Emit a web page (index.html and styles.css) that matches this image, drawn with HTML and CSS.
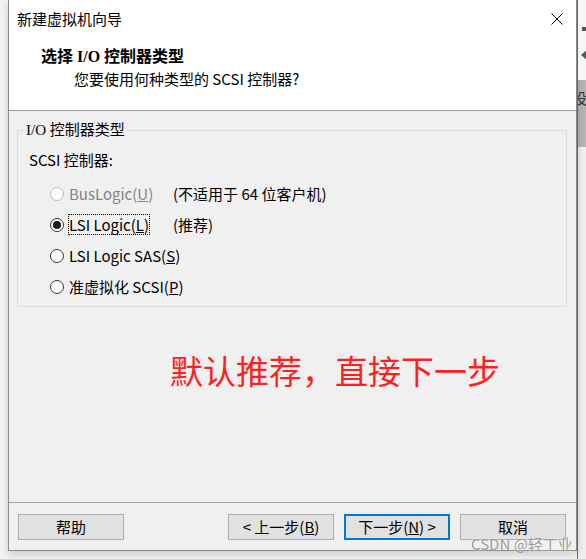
FILE: index.html
```html
<!DOCTYPE html>
<html lang="zh-CN">
<head>
<meta charset="utf-8">
<title>新建虚拟机向导</title>
<link rel="stylesheet" href="styles.css">
</head>
<body>
<div class="screen">
  <div class="dialog">
    <div class="top">
      <div class="titlebar">
        <span class="title">新建虚拟机向导</span>
        <svg class="close" viewBox="0 0 12 12" width="12" height="12"><path d="M0.5 0.5 L11.5 11.5 M11.5 0.5 L0.5 11.5" stroke="#000" stroke-width="1" fill="none"/></svg>
      </div>
      <div class="head-title">选择 I/O 控制器类型</div>
      <div class="head-sub">您要使用何种类型的 SCSI 控制器?</div>
    </div>
    <div class="body">
      <fieldset class="group">
        <legend>I/O 控制器类型</legend>
        <div class="label">SCSI 控制器:</div>
        <div class="options">
          <div class="opt disabled">
            <span class="radio"></span>
            <span class="cell"><span class="txt">BusLogic(<u>U</u>)</span></span>
            <span class="note">(不适用于 64 位客户机)</span>
          </div>
          <div class="opt">
            <span class="radio on"></span>
            <span class="cell"><span class="txt focus">LSI Logic(<u>L</u>)</span></span>
            <span class="note">(推荐)</span>
          </div>
          <div class="opt">
            <span class="radio"></span>
            <span class="cell"><span class="txt">LSI Logic SAS(<u>S</u>)</span></span>
          </div>
          <div class="opt">
            <span class="radio"></span>
            <span class="cell"><span class="txt">准虚拟化 SCSI(<u>P</u>)</span></span>
          </div>
        </div>
      </fieldset>
      <div class="hint">默认推荐，直接下一步</div>
    </div>
    <div class="footer">
      <button class="btn">帮助</button>
      <div class="spacer"></div>
      <button class="btn">&lt; 上一步(<u>B</u>)</button>
      <button class="btn default">下一步(<u>N</u>) &gt;</button>
      <button class="btn">取消</button>
    </div>
    <div class="watermark">CSDN @轻工业</div>
  </div>
  <div class="side">
    <div class="side-top"><span class="dot"></span><span class="arrow"></span></div>
    <div class="side-mid"><span class="clip">设</span></div>
    <div class="side-rest"></div>
  </div>
</div>
</body>
</html>
```

FILE: styles.css
```css
html, body {
  margin: 0;
  padding: 0;
  height: 100%;
}
body {
  background: #f3f3f3;
  font-family: "Noto Sans CJK SC", sans-serif;
  font-size: 15px;
  color: #000;
  overflow: hidden;
}
.screen {
  display: flex;
  height: 559px;
}
.dialog {
  position: relative;
  flex: none;
  margin-left: 8px;
  width: 567px;
  height: 550px;
  border: 1px solid #8a8a8a;
  border-top: none;
  background: #f0f0f0;
  box-shadow: 0 3px 8px rgba(0, 0, 0, 0.18);
  display: flex;
  flex-direction: column;
}
.top {
  flex: none;
  height: 110px;
  background: #fff;
  border-bottom: 1px solid #a0a0a0;
}
.titlebar {
  height: 38px;
  display: flex;
  align-items: center;
  justify-content: space-between;
  padding: 0 13px 0 8px;
}
.title {
  line-height: 20px;
}
.close {
  display: block;
  width: 12px;
  height: 12px;
}
.head-title {
  margin: 9px 0 0 32px;
  font-family: "Liberation Serif", "Noto Sans CJK SC", serif;
  font-weight: bold;
  font-size: 16px;
  line-height: 20px;
}
.head-sub {
  margin: 2px 0 0 65px;
  line-height: 20px;
}
.body {
  flex: none;
  height: 391px;
}
.group {
  margin: 9px 9px 0 8px;
  padding: 10px 0 9px 0;
  border: 1px solid #dcdcdc;
  min-width: 0;
}
.group legend {
  margin-left: 6px;
  padding: 0 2px;
  line-height: 20px;
  font-family: "Liberation Serif", "Noto Sans CJK SC", serif;
  font-size: 15px;
}
.label {
  margin-left: 11px;
  line-height: 20px;
}
.options {
  margin-top: 13px;
  display: flex;
  flex-direction: column;
  gap: 10px;
}
.opt {
  display: flex;
  align-items: center;
  height: 21px;
  padding-left: 32px;
}
.radio {
  flex: none;
  box-sizing: border-box;
  width: 14px;
  height: 14px;
  border: 1px solid #333;
  border-radius: 50%;
  background: #fff;
  display: flex;
  align-items: center;
  justify-content: center;
}
.radio.on::after {
  content: "";
  width: 8px;
  height: 8px;
  border-radius: 50%;
  background: #1a1a1a;
}
.cell {
  flex: none;
  width: 105px;
  margin-left: 4px;
  white-space: nowrap;
}
.txt {
  display: inline-block;
  line-height: 19px;
  border: 1px dotted transparent;
}
.txt.focus {
  border-color: #000;
}
.note {
  white-space: nowrap;
  line-height: 19px;
}
.disabled .radio {
  border-color: #bcbcbc;
  background: #fbfbfb;
}
.disabled .txt {
  color: #838383;
}
.hint {
  margin: 43px 0 0 161px;
  font-size: 33px;
  line-height: 40px;
  color: #ff1f1f;
}
.footer {
  flex: 1;
  display: flex;
  align-items: flex-start;
  gap: 10px;
  padding: 11px 10px 0 9px;
  border-top: 1px solid #a0a0a0;
}
.spacer {
  flex: 1;
}
.btn {
  flex: none;
  box-sizing: border-box;
  width: 106px;
  height: 26px;
  padding: 0;
  border: 1px solid #adadad;
  background: #e1e1e1;
  font-family: "Noto Sans CJK SC", sans-serif;
  font-size: 15px;
  line-height: 22px;
  color: #000;
}
.btn.default {
  border: 2px solid #0078d7;
}
.watermark {
  position: absolute;
  left: 462px;
  top: 535px;
  font-size: 15px;
  line-height: 18px;
  color: #9a9a9a;
  text-shadow: 0 0 2px #fff;
  white-space: nowrap;
}
.side {
  flex: 1;
  display: flex;
  flex-direction: column;
  border-left: 1px solid #6f6f6f;
  overflow: hidden;
}
.side-top {
  height: 80px;
  background: #f6f6f6;
  position: relative;
}
.dot {
  position: absolute;
  left: 4px;
  top: 27px;
  width: 4px;
  height: 4px;
  background: #4a5560;
}
.arrow {
  position: absolute;
  left: 3px;
  top: 50px;
  width: 0;
  height: 0;
  border-top: 5px solid transparent;
  border-bottom: 5px solid transparent;
  border-right: 6px solid #4a5560;
}
.side-mid {
  height: 67px;
  background: #b4b4b4;
}
.clip {
  display: block;
  margin: 8px 0 0 -6px;
  font-size: 15px;
  line-height: 20px;
  color: #333;
}
.side-rest {
  flex: 1;
  background: #efefef;
}
```
